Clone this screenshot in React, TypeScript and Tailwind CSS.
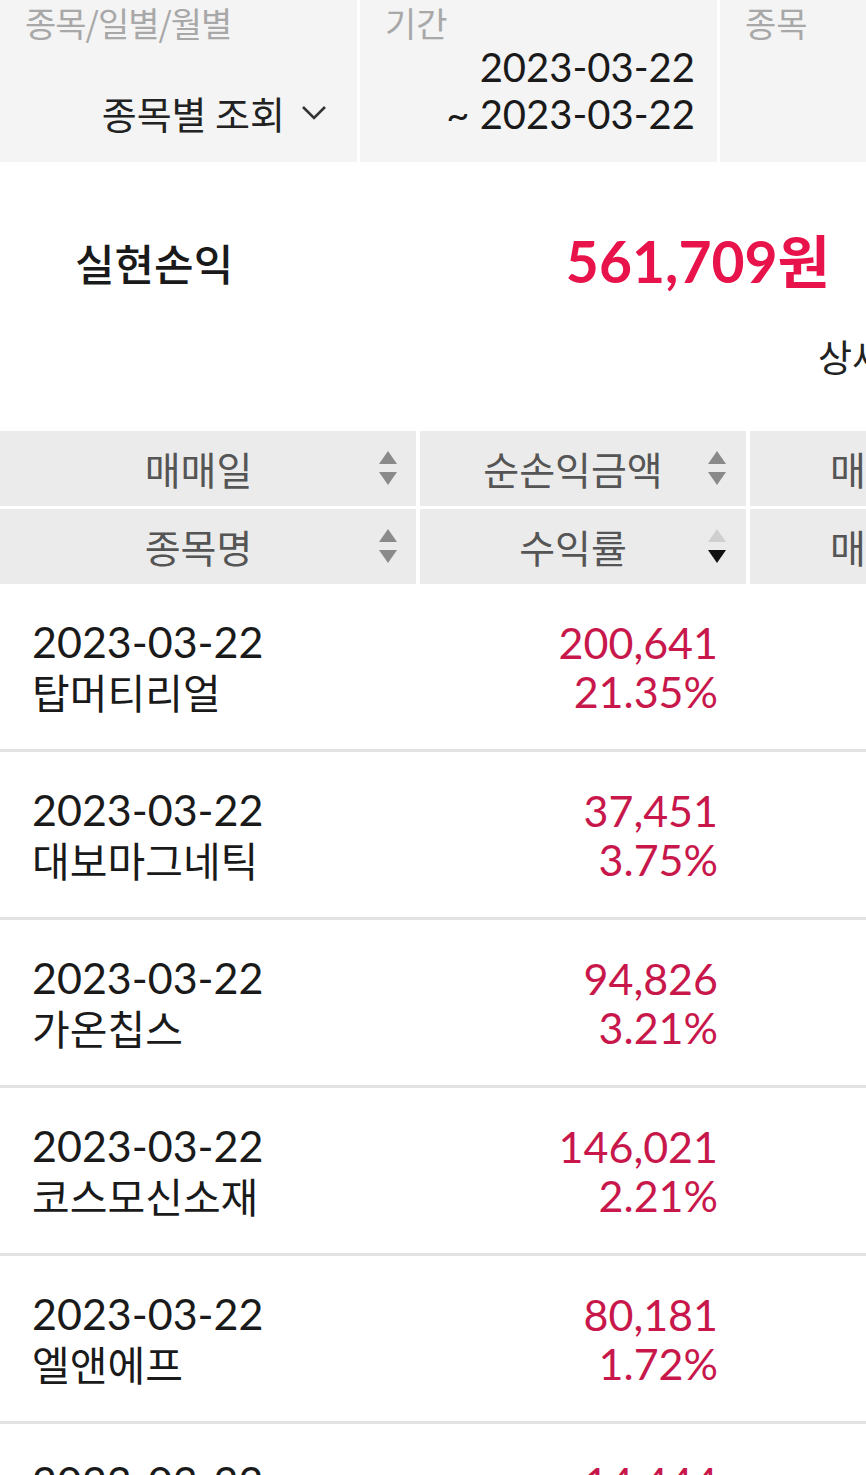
const kr = "font-['Noto_Sans_CJK_KR','Noto_Sans',sans-serif]";
const num = "font-['Lato','Noto_Sans_CJK_KR',sans-serif]";

function SortIcon({ up = "#8a8a8a", down = "#8a8a8a" }: { up?: string; down?: string }) {
  return (
    <svg width="22" height="40" viewBox="0 0 22 40">
      <path d="M11 2 L20 15 L2 15 Z" fill={up} />
      <path d="M2 23 L20 23 L11 36 Z" fill={down} />
    </svg>
  );
}

const rows = [
  { date: "2023-03-22", name: "탑머티리얼", amount: "200,641", rate: "21.35%" },
  { date: "2023-03-22", name: "대보마그네틱", amount: "37,451", rate: "3.75%" },
  { date: "2023-03-22", name: "가온칩스", amount: "94,826", rate: "3.21%" },
  { date: "2023-03-22", name: "코스모신소재", amount: "146,021", rate: "2.21%" },
  { date: "2023-03-22", name: "엘앤에프", amount: "80,181", rate: "1.72%" },
  { date: "2023-03-22", name: "에코프로", amount: "14,444", rate: "0.98%" },
];

export default function App() {
  return (
    <div className={`w-[866px] h-[1475px] overflow-hidden bg-white ${kr}`}>
      {/* Filter bar */}
      <div className="flex h-[162px] bg-white gap-[3px] w-[900px]">
        <div className="w-[357px] shrink-0 bg-[#f4f4f4] flex flex-col">
          <div className="pl-[25px] h-[44px] leading-[46px] text-[34px] text-[#a8a8a8] tracking-[-1px]">종목/일별/월별</div>
          <div className="flex items-center justify-end pr-[30px] mt-[44px] h-[50px]">
            <span className="text-[38px] text-[#222] leading-none">종목별 조회</span>
            <svg className="ml-[16px]" width="26" height="16" viewBox="0 0 26 16">
              <path d="M2 2 L13 13 L24 2" fill="none" stroke="#333" strokeWidth="2.6" />
            </svg>
          </div>
        </div>
        <div className="w-[357px] shrink-0 bg-[#f4f4f4] flex flex-col">
          <div className="pl-[25px] h-[44px] leading-[46px] text-[34px] text-[#a8a8a8]">기간</div>
          <div className={`pr-[22px] text-right text-[40px] leading-[47px] text-[#1a1a1a] ${num}`}>
            <div>2023-03-22</div>
            <div>~ 2023-03-22</div>
          </div>
        </div>
        <div className="flex-1 bg-[#f4f4f4]">
          <div className="pl-[25px] h-[44px] leading-[46px] text-[34px] text-[#a8a8a8]">종목</div>
        </div>
      </div>

      {/* Summary */}
      <div className="flex items-center justify-between pl-[75px] pr-[36px] h-[200px] -mb-[30px]">
        <span className="text-[43px] font-medium text-[#1a1a1a]">실현손익</span>
        <span className={`text-[57px] font-bold text-[#e8134b] ${num}`}>561,709원</span>
      </div>
      <div className="h-[96px] pl-[818px] whitespace-nowrap">
        <span className="text-[37px] text-[#222] leading-[48px]">상세보기</span>
      </div>

      {/* Table header */}
      <div className="flex flex-col gap-[3px] mt-[3px]">
        {[
          ["매매일", "순손익금액", "매매"],
          ["종목명", "수익률", "매매"],
        ].map((labels, i) => (
          <div key={i} className="flex gap-[4px] h-[75px] w-[900px]">
            <div className="w-[416px] shrink-0 bg-[#ebebeb] flex items-center">
              <span className="flex-1 text-center text-[39px] text-[#555] pl-[20px]">{labels[0]}</span>
              <div className="mr-[17px]">
                <SortIcon />
              </div>
            </div>
            <div className="w-[326px] shrink-0 bg-[#ebebeb] flex items-center">
              <span className="flex-1 text-center text-[39px] text-[#555] pl-[20px]">{labels[1]}</span>
              <div className="mr-[18px]">
                {i === 1 ? <SortIcon up="#cfcfcf" down="#111" /> : <SortIcon />}
              </div>
            </div>
            <div className="flex-1 bg-[#ebebeb] flex items-center pl-[80px] whitespace-nowrap">
              <span className="text-[39px] text-[#555]">{labels[2]}</span>
            </div>
          </div>
        ))}
      </div>

      {/* Rows */}
      <div>
        {rows.map((r, i) => (
          <div key={i} className="flex items-center h-[168px] border-b-[3px] border-[#e3e3e3]">
            <div className="w-[420px] pl-[32px] text-[#1a1a1a]">
              <div className={`text-[43px] leading-[48px] ${num}`}>{r.date}</div>
              <div className="text-[41px] leading-[50px]">{r.name}</div>
            </div>
            <div className={`w-[298px] text-right text-[#c8174b] text-[43px] leading-[49px] ${num}`}>
              <div>{r.amount}</div>
              <div>{r.rate}</div>
            </div>
          </div>
        ))}
      </div>
    </div>
  );
}
